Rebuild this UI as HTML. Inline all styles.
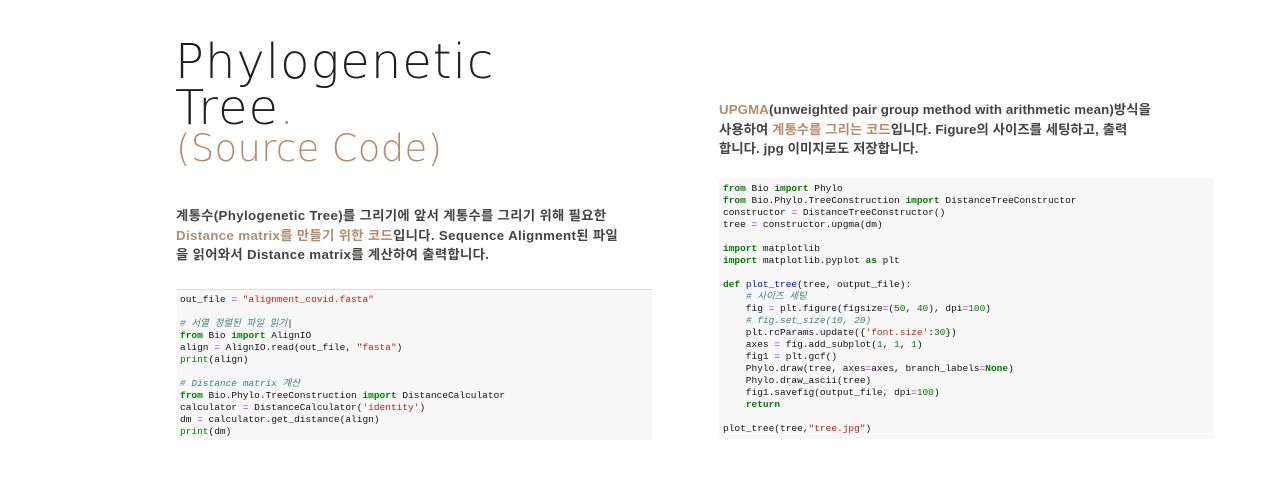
<!DOCTYPE html>
<html><head><meta charset="utf-8"><style>
body{margin:0;width:1280px;height:494px;background:#fff;position:relative;overflow:hidden;font-family:"Liberation Sans","Noto Sans CJK KR",sans-serif}
.a{position:absolute;white-space:nowrap}
.t{font-family:"DejaVu Sans",sans-serif;font-weight:200;color:#1e1e1e;font-size:48px;line-height:46px;letter-spacing:1px}
.br{color:#b58c6c}
.p{font-weight:bold;font-size:13.3px;line-height:19.5px;color:#444}
.c{background:#f7f7f7;font-family:"Liberation Mono","Noto Sans CJK KR",monospace;font-size:9.5px;line-height:12px;color:#111;white-space:pre}
.k{color:#008000;font-weight:bold}.s{color:#ba2121}.m{color:#408080;font-style:italic}.o{color:#aa22ff}.n{color:#008000}.f{color:#0000ff}.b{color:#008000}
</style></head><body>
<div class="a t" style="left:175px;top:39px">Phylogenetic<br>Tree<span class="br">.</span></div>
<div class="a t br" style="left:176px;top:129px;font-size:37px;line-height:40px;letter-spacing:0.3px">(Source Code)</div>
<div class="a p" style="left:176px;top:206px;letter-spacing:0.35px">계통수(Phylogenetic Tree)를 그리기에 앞서 계통수를 그리기 위해 필요한<br><span class="br">Distance matrix를 만들기 위한 코드</span>입니다. Sequence Alignment된 파일<br>을 읽어와서 Distance matrix를 계산하여 출력합니다.</div>
<div class="a p" style="left:719px;top:100px;letter-spacing:0.1px">
<span class="br">UPGMA</span>(unweighted pair group method with arithmetic mean)방식을<br>사용하여 <span class="br">계통수를 그리는 코드</span>입니다. Figure의 사이즈를 세팅하고, 출력<br>합니다. jpg 이미지로도 저장합니다.</div>
<div class="a c" style="left:177px;top:289px;width:472px;height:146px;border-top:1px solid #ddd;padding:4px 0 0 3px">out_file <span class="o">=</span> <span class="s">"alignment_covid.fasta"</span>

<span class="m"># 서열 정렬된 파일 읽기</span>|
<span class="k">from</span> Bio <span class="k">import</span> AlignIO
align <span class="o">=</span> AlignIO.read(out_file, <span class="s">"fasta"</span>)
<span class="b">print</span>(align)

<span class="m"># Distance matrix 계산</span>
<span class="k">from</span> Bio.Phylo.TreeConstruction <span class="k">import</span> DistanceCalculator
calculator <span class="o">=</span> DistanceCalculator(<span class="s">'identity'</span>)
dm <span class="o">=</span> calculator.get_distance(align)
<span class="b">print</span>(dm)</div>
<div class="a c" style="left:719px;top:178px;width:490px;height:256px;padding:5px 0 0 4px"><span class="k">from</span> Bio <span class="k">import</span> Phylo
<span class="k">from</span> Bio.Phylo.TreeConstruction <span class="k">import</span> DistanceTreeConstructor
constructor <span class="o">=</span> DistanceTreeConstructor()
tree <span class="o">=</span> constructor.upgma(dm)

<span class="k">import</span> matplotlib
<span class="k">import</span> matplotlib.pyplot <span class="k">as</span> plt

<span class="k">def</span> <span class="f">plot_tree</span>(tree, output_file):
    <span class="m"># 사이즈 세팅</span>
    fig <span class="o">=</span> plt.figure(figsize<span class="o">=</span>(<span class="n">50</span>, <span class="n">40</span>), dpi<span class="o">=</span><span class="n">100</span>)
    <span class="m"># fig.set_size(10, 20)</span>
    plt.rcParams.update({<span class="s">'font.size'</span>:<span class="n">30</span>})
    axes <span class="o">=</span> fig.add_subplot(<span class="n">1</span>, <span class="n">1</span>, <span class="n">1</span>)
    fig1 <span class="o">=</span> plt.gcf()
    Phylo.draw(tree, axes<span class="o">=</span>axes, branch_labels<span class="o">=</span><span class="k">None</span>)
    Phylo.draw_ascii(tree)
    fig1.savefig(output_file, dpi<span class="o">=</span><span class="n">100</span>)
    <span class="k">return</span>

plot_tree(tree,<span class="s">"tree.jpg"</span>)</div>
</body></html>
